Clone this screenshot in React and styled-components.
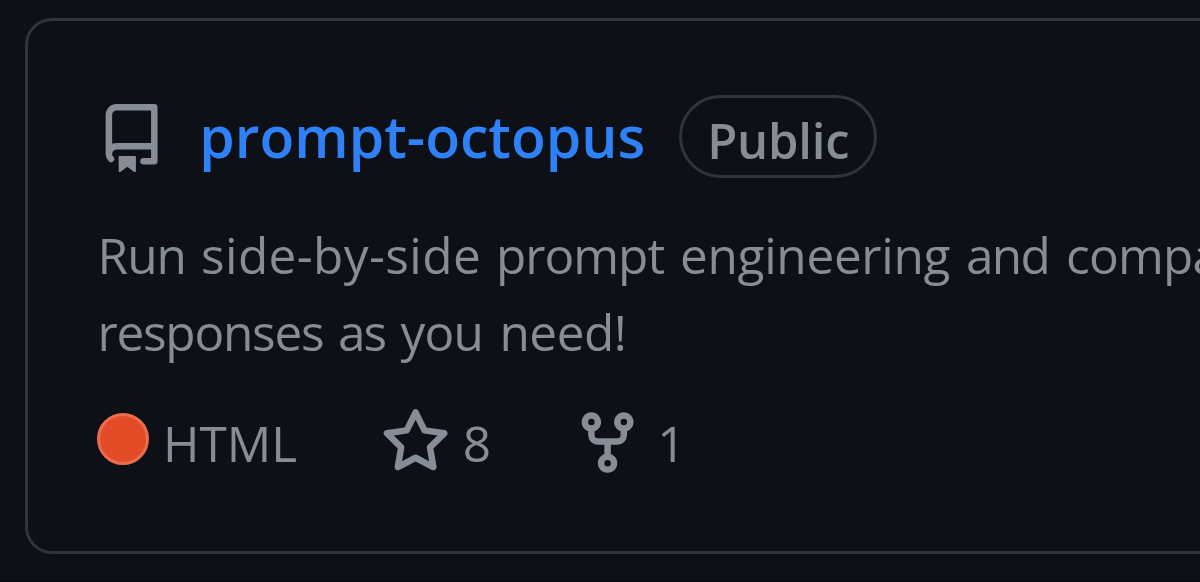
import React from "react";
import styled, { createGlobalStyle } from "styled-components";

const GlobalStyle = createGlobalStyle`
  * { box-sizing: border-box; }
  body { margin: 0; background: #0d1017; overflow: hidden; }
`;

const Page = styled.main`
  height: 582px;
  padding: 18px 0 0 25px;
  overflow: hidden;
  background: #0d1017;
  border-bottom: 1px solid #07080c;
  font-family: "Segoe UI", "Open Sans", "Noto Sans", sans-serif;
  color: #868d97;
`;

const Card = styled.article`
  width: 1500px;
  height: 536px;
  padding: 74px 0 0 69px;
  border: 3px solid #30343c;
  border-radius: 27px;
`;

const Header = styled.header`
  display: flex;
  align-items: flex-start;
  height: 84px;
`;

const Icon = styled.svg`
  display: block;
  flex: none;
  width: 69.2px;
  height: 69.2px;
  margin: ${(p) => p.$margin || "0"};
  fill: #868d97;
`;

const RepoName = styled.a`
  width: 480px;
  margin-left: 33.3px;
  font-size: 57px;
  font-weight: 600;
  line-height: 83px;
  letter-spacing: 0.05px;
  color: #2f81f7;
  white-space: nowrap;
`;

const Badge = styled.span`
  display: flex;
  width: 198px;
  height: 83px;
  padding-left: 25px;
  border: 3px solid #30343c;
  border-radius: 42px;
  font-size: 49px;
  font-weight: 600;
  line-height: 85px;
  letter-spacing: -0.2px;
`;

const Description = styled.p`
  margin: 38px 0 0 0.5px;
  font-size: 49.5px;
  line-height: 77px;
`;

const Line = styled.span`
  display: flex;
  white-space: pre;
`;

const Word = styled.span`
  flex: none;
  width: ${(p) => p.$width}px;
  letter-spacing: ${(p) => p.$tracking}px;
`;

const Stats = styled.footer`
  display: flex;
  align-items: flex-start;
  height: 70px;
  margin-top: 37px;
  font-size: 49.5px;
  line-height: 71px;
`;

const Dot = styled.span`
  width: 52px;
  height: 52px;
  margin-top: 5px;
  border: 3px solid #eb6d4c;
  border-radius: 50%;
  background: #e34c26;
`;

const Stat = styled.span`
  width: ${(p) => p.$width}px;
  margin-left: ${(p) => p.$gap}px;
`;

const description = [
  [
    { text: "Run ", width: 103.5, tracking: -0.9 },
    { text: "side-by-side ", width: 295, tracking: 0.4 },
    { text: "prompt ", width: 184, tracking: -1 },
    { text: "engineering ", width: 286, tracking: -0.3 },
    { text: "and ", width: 100, tracking: -1.7 },
    { text: "compare", width: 200, tracking: -0.8 },
  ],
  [
    { text: "responses ", width: 240.5, tracking: -1.25 },
    { text: "as ", width: 62.5, tracking: -2 },
    { text: "you ", width: 99, tracking: -0.8 },
    { text: "need!", width: 140, tracking: -0.5 },
  ],
];

export default function App() {
  return (
    <Page>
      <GlobalStyle />
      <Card>
        <Header>
          <Icon viewBox="0 0 16 16" $margin="8.7px 0 0 -0.3px">
            <path fillRule="evenodd" d="M2 2.5A2.5 2.5 0 014.5 0h8.75a.75.75 0 01.75.75v12.5a.75.75 0 01-.75.75h-2.5a.75.75 0 110-1.5h1.75v-2h-8a1 1 0 00-.714 1.7.75.75 0 01-1.072 1.05A2.495 2.495 0 012 11.5v-9zm10.5-1V9h-8c-.356 0-.694.074-1 .208V2.5a1 1 0 011-1h8zM5 12.25v3.25a.25.25 0 00.4.2l1.45-1.087a.25.25 0 01.3 0L8.6 15.7a.25.25 0 00.4-.2v-3.25a.25.25 0 00-.25-.25h-3.5a.25.25 0 00-.25.25z" />
          </Icon>
          <RepoName>prompt-octopus</RepoName>
          <Badge>Public</Badge>
        </Header>
        <Description>
          {description.map((words, i) => (
            <Line key={i}>
              {words.map((word) => (
                <Word key={word.text} $width={word.width} $tracking={word.tracking}>
                  {word.text}
                </Word>
              ))}
            </Line>
          ))}
        </Description>
        <Stats>
          <Dot />
          <Stat $gap={14} $width={217.5}>HTML</Stat>
          <Icon viewBox="0 0 16 16">
            <path fillRule="evenodd" d="M8 .25a.75.75 0 01.673.418l1.882 3.815 4.21.612a.75.75 0 01.416 1.279l-3.046 2.97.719 4.192a.75.75 0 01-1.088.791L8 12.347l-3.766 1.98a.75.75 0 01-1.088-.79l.72-4.194L.818 6.374a.75.75 0 01.416-1.28l4.21-.611L7.327.668A.75.75 0 018 .25zm0 2.445L6.615 5.5a.75.75 0 01-.564.41l-3.097.45 2.24 2.184a.75.75 0 01.216.664l-.528 3.084 2.769-1.456a.75.75 0 01.698 0l2.77 1.456-.53-3.084a.75.75 0 01.216-.664l2.24-2.183-3.096-.45a.75.75 0 01-.564-.41L8 2.694v.001z" />
          </Icon>
          <Stat $gap={13} $width={110.3}>8</Stat>
          <Icon viewBox="0 0 16 16">
            <path fillRule="evenodd" d="M5 3.25a.75.75 0 11-1.5 0 .75.75 0 011.5 0zm0 2.122a2.25 2.25 0 10-1.5 0v.878A2.25 2.25 0 005.75 8.5h1.5v2.128a2.251 2.251 0 101.5 0V8.5h1.5a2.25 2.25 0 002.25-2.25v-.878a2.25 2.25 0 10-1.5 0v.878a.75.75 0 01-.75.75h-4.5A.75.75 0 015 6.25v-.878zm3.75 7.378a.75.75 0 11-1.5 0 .75.75 0 011.5 0zm3-8.75a.75.75 0 100-1.5.75.75 0 000 1.5z" />
          </Icon>
          <Stat $gap={15} $width={60}>1</Stat>
        </Stats>
      </Card>
    </Page>
  );
}
